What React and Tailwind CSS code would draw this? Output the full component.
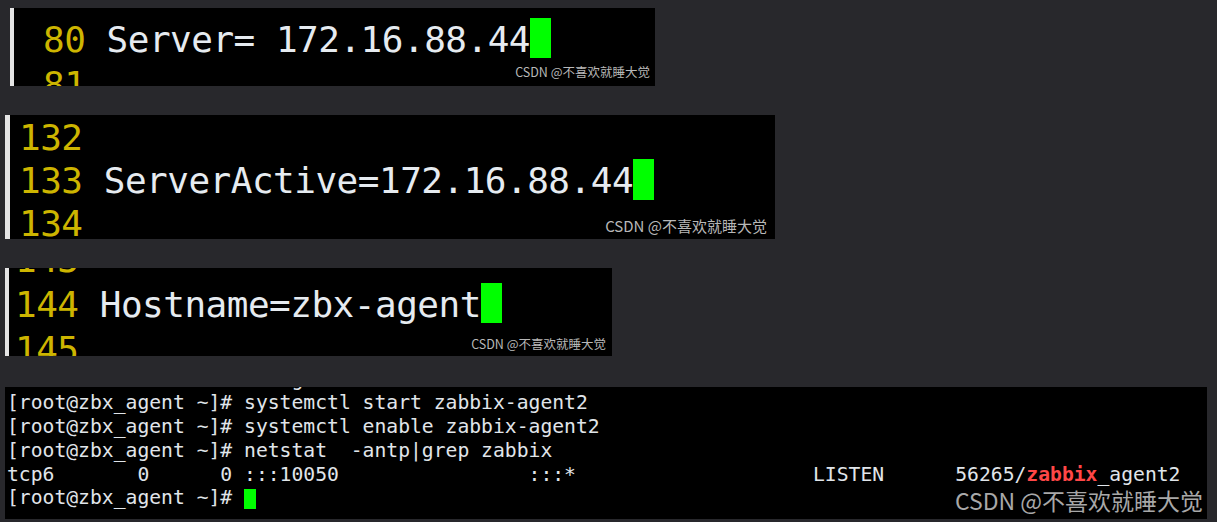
import React from 'react'

const Cursor = ({ className }) => <span className={`inline-block shrink-0 bg-[#00ff00] ${className}`} />

const Watermark = ({ className }) => (
  <div
    className={`absolute whitespace-nowrap leading-none tracking-normal font-['Noto_Sans_CJK_SC',sans-serif] ${className}`}
  >
    CSDN @不喜欢就睡大觉
  </div>
)

const App = () => {
  return (
    <div className="w-[1217px] h-[522px] overflow-hidden bg-[#28282c] pt-[8px]">
      {/* vim: Server */}
      <div className="relative ml-[10px] w-[645px] h-[78px] overflow-hidden border-l-4 border-[#e4e4e4] bg-black pl-[29px] pt-[9px] whitespace-pre font-['DejaVu_Sans_Mono',monospace] text-[36px] leading-[45px] tracking-[-0.5px]">
        <div className="flex items-start">
          <span className="text-[#cdb500]">80 </span>
          <span className="text-[#e6ebf0]">Server= 172.16.88.44</span>
          <Cursor className="w-[21px] h-[40px] mt-[1px]" />
        </div>
        <div className="text-[#cdb500]">81</div>
        <Watermark className="right-[5px] bottom-[8px] text-[12.5px] text-[#b8b8b8]" />
      </div>

      {/* vim: ServerActive */}
      <div className="relative mt-[29px] ml-[5px] w-[770px] h-[124px] overflow-hidden border-l-[5px] border-[#e4e4e4] bg-black pl-[9px] pt-[1px] whitespace-pre font-['DejaVu_Sans_Mono',monospace] text-[36px] leading-[43px] tracking-[-0.5px]">
        <div className="text-[#cdb500]">132</div>
        <div className="flex items-start">
          <span className="text-[#cdb500]">133 </span>
          <span className="text-[#e6ebf0]">ServerActive=172.16.88.44</span>
          <Cursor className="w-[21px] h-[41px]" />
        </div>
        <div className="text-[#cdb500]">134</div>
        <Watermark className="right-[8px] bottom-[6px] text-[15px] text-[#b8b8b8]" />
      </div>

      {/* vim: Hostname */}
      <div className="relative mt-[29px] ml-[5px] w-[607px] h-[88px] overflow-hidden border-l-4 border-[#e4e4e4] bg-black pl-[6px] whitespace-pre font-['DejaVu_Sans_Mono',monospace] text-[36px] leading-[45px] tracking-[-0.5px]">
        <div className="mt-[-31px] text-[#cdb500]">143</div>
        <div className="flex items-start">
          <span className="text-[#cdb500]">144 </span>
          <span className="text-[#e6ebf0]">Hostname=zbx-agent</span>
          <Cursor className="w-[21px] h-[40px] mt-[1px]" />
        </div>
        <div className="text-[#cdb500]">145</div>
        <Watermark className="right-[6px] bottom-[6px] text-[12.5px] text-[#b8b8b8]" />
      </div>

      {/* terminal */}
      <div className="relative mt-[31px] ml-[5px] w-[1202px] h-[132px] overflow-hidden bg-black pl-[2px] whitespace-pre font-['DejaVu_Sans_Mono',monospace] text-[19.7px] leading-[23.8px] text-[#e0e5ea]">
        <div className="mt-[-19.5px]">{'                        g'}</div>
        <div>[root@zbx_agent ~]# systemctl start zabbix-agent2</div>
        <div>[root@zbx_agent ~]# systemctl enable zabbix-agent2</div>
        <div>[root@zbx_agent ~]# netstat  -antp|grep zabbix</div>
        <div>
          {'tcp6       0      0 :::10050                :::*                    LISTEN      56265/'}
          <span className="font-bold text-[#ff4747]">zabbix</span>
          _agent2
        </div>
        <div className="flex items-start">
          <span>[root@zbx_agent ~]# </span>
          <Cursor className="w-[12px] h-[20px] mt-[2.5px]" />
        </div>
        <Watermark className="right-[4px] bottom-[7px] text-[23px] text-[#a8a8a8]" />
      </div>
    </div>
  )
}

export default App
